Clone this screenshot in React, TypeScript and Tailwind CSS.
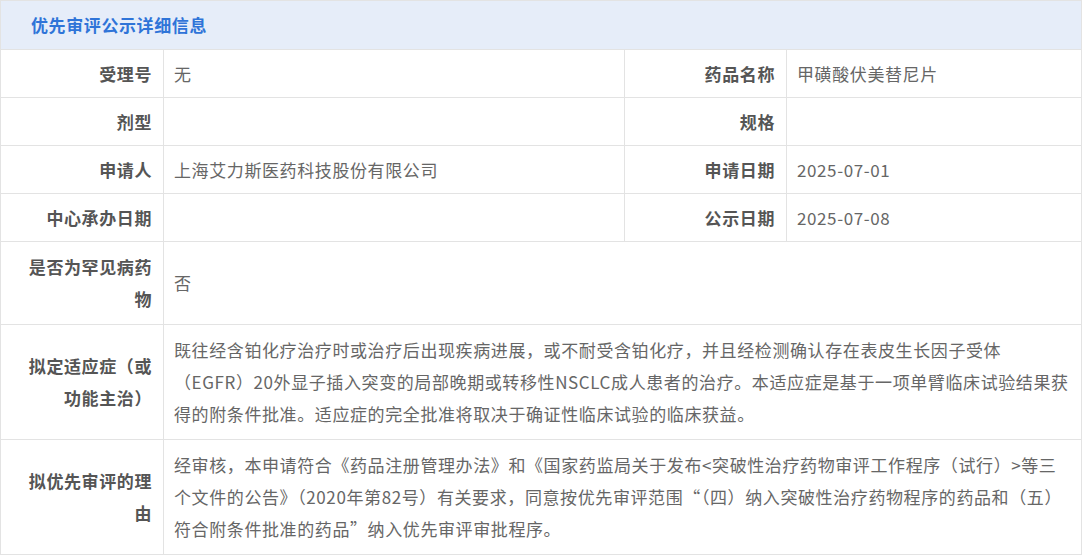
export default function App() {
  const font = { fontFamily: '"Microsoft YaHei","Noto Sans CJK SC",sans-serif' };
  const L = "border border-[#e3e3e3] text-right align-middle pr-[11px] pl-[20px] py-[7px] font-bold text-[#555] leading-[32px]";
  const V = "border border-[#e3e3e3] text-left align-middle px-[10px] py-[7px] text-[#666] leading-[32px]";
  return (
    <div className="w-[1082px] bg-white text-[17px] tracking-[0.6px]" style={font}>
      <table className="w-full border-collapse border border-[#e3e3e3] table-fixed">
        <colgroup>
          <col className="w-[163px]" />
          <col className="w-[461px]" />
          <col className="w-[162px]" />
          <col />
        </colgroup>
        <thead>
          <tr className="h-[49px]">
            <th colSpan={4} className="bg-[#e6edf9] text-left pl-[30px] text-[#2f74d8] font-bold border border-[#e3e3e3]">优先审评公示详细信息</th>
          </tr>
        </thead>
        <tbody>
          <tr className="h-[48px]"><td className={L}>受理号</td><td className={V}>无</td><td className={L}>药品名称</td><td className={V}>甲磺酸伏美替尼片</td></tr>
          <tr className="h-[48px]"><td className={L}>剂型</td><td className={V}></td><td className={L}>规格</td><td className={V}></td></tr>
          <tr className="h-[48px]"><td className={L}>申请人</td><td className={V}>上海艾力斯医药科技股份有限公司</td><td className={L}>申请日期</td><td className={V}>2025-07-01</td></tr>
          <tr className="h-[48px]"><td className={L}>中心承办日期</td><td className={V}></td><td className={L}>公示日期</td><td className={V}>2025-07-08</td></tr>
          <tr><td className={L + " py-[9px]"}>是否为罕见病药物</td><td className={V} colSpan={3}>否</td></tr>
          <tr><td className={L + " py-[9px]"}>拟定适应症（或功能主治）</td><td className={V + " py-[9px]"} colSpan={3}>既往经含铂化疗治疗时或治疗后出现疾病进展，或不耐受含铂化疗，并且经检测确认存在表皮生长因子受体（EGFR）20外显子插入突变的局部晚期或转移性NSCLC成人患者的治疗。本适应症是基于一项单臂临床试验结果获得的附条件批准。适应症的完全批准将取决于确证性临床试验的临床获益。</td></tr>
          <tr><td className={L + " py-[9px]"}>拟优先审评的理由</td><td className={V + " py-[9px]"} colSpan={3}>经审核，本申请符合《药品注册管理办法》和《国家药监局关于发布&lt;突破性治疗药物审评工作程序（试行）&gt;等三个文件的公告》（2020年第82号）有关要求，同意按优先审评范围“（四）纳入突破性治疗药物程序的药品和（五）符合附条件批准的药品”纳入优先审评审批程序。</td></tr>
        </tbody>
      </table>
    </div>
  );
}
